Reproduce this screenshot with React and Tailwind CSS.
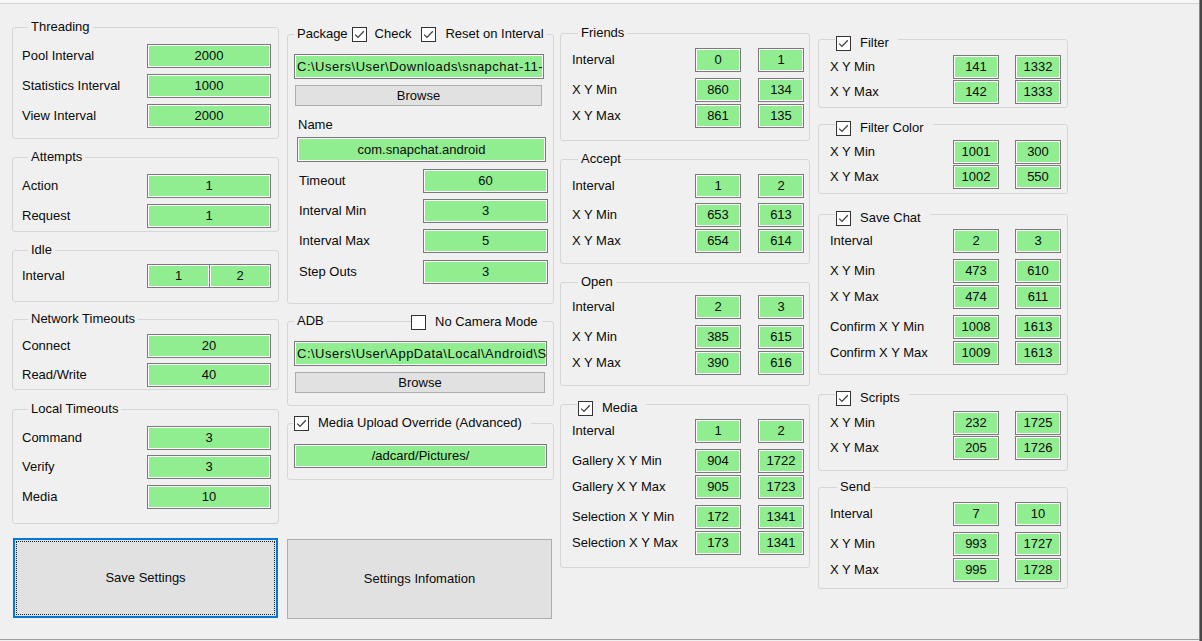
import React from 'react';

// checkbox glyph, classic win32 look
function Check({ checked = true }) {
  return (
    <span className="flex h-[15px] w-[15px] shrink-0 items-center justify-center border border-[#333333] bg-white">
      {checked && (
        <svg width="13" height="13" viewBox="0 0 13 13">
          <path d="M2.2 6.6 L5 9.4 L10.8 3.2" fill="none" stroke="#404040" strokeWidth="1.3" />
        </svg>
      )}
    </span>
  );
}

function Field({ value, className = '' }) {
  return (
    <div className={`flex h-[24px] items-center justify-center border border-[#7a7a7a] bg-[#90ee90] shadow-[inset_0_0_0_1px_#ffffff] ${className}`}>
      {value}
    </div>
  );
}

function PathField({ value, className = '' }) {
  return (
    <div className={`flex h-[25px] items-center overflow-hidden whitespace-nowrap border border-[#7a7a7a] bg-[#90ee90] pl-[2px] tracking-[0.5px] shadow-[inset_0_0_0_1px_#ffffff] ${className}`}>
      {value}
    </div>
  );
}

function Title({ children }) {
  return (
    <legend className="ml-[6px] px-[3px]">
      <span className="flex h-[16px] items-center">{children}</span>
    </legend>
  );
}

function CheckTitle({ children }) {
  return (
    <legend className="ml-[5px] pl-[1px] pr-[9px]">
      <span className="flex h-[16px] translate-y-[4px] items-center gap-[9px]">
        <Check />
        {children}
      </span>
    </legend>
  );
}

function Row({ label, children, className = '' }) {
  return (
    <div className={`flex h-[24px] items-center ${className}`}>
      <span className="flex-1 whitespace-nowrap">{label}</span>
      {children}
    </div>
  );
}

// X / Y input pair used by the coordinate groups
function Pair({ a, b, gap }) {
  return (
    <div className={`flex ${gap}`}>
      <Field value={a} className="w-[46px]" />
      <Field value={b} className="w-[46px]" />
    </div>
  );
}

const box = 'w-full rounded-[3px] border border-[#d6d6d6]';

function ColumnOne() {
  return (
    <div className="flex w-[267px] flex-col">
      <fieldset className={`${box} mt-[15px] pb-[10px] pl-[9px] pr-[7px]`}>
        <Title>Threading</Title>
        <Row label="Pool Interval" className="mt-[9px]"><Field value="2000" className="w-[124px]" /></Row>
        <Row label="Statistics Interval" className="mt-[6px]"><Field value="1000" className="w-[124px]" /></Row>
        <Row label="View Interval" className="mt-[6px]"><Field value="2000" className="w-[124px]" /></Row>
      </fieldset>

      <fieldset className={`${box} mt-[10px] pb-[3px] pl-[9px] pr-[7px]`}>
        <Title>Attempts</Title>
        <Row label="Action" className="mt-[9px]"><Field value="1" className="w-[124px]" /></Row>
        <Row label="Request" className="mt-[6px]"><Field value="1" className="w-[124px]" /></Row>
      </fieldset>

      <fieldset className={`${box} mt-[10px] pb-[13px] pl-[9px] pr-[7px]`}>
        <Title>Idle</Title>
        <Row label="Interval" className="mt-[6px]">
          <div className="flex w-[124px]">
            <Field value="1" className="w-[63px]" />
            <Field value="2" className="-ml-px w-[62px]" />
          </div>
        </Row>
      </fieldset>

      <fieldset className={`${box} mt-[9px] pb-[2px] pl-[9px] pr-[7px]`}>
        <Title>Network Timeouts</Title>
        <Row label="Connect" className="mt-[7px]"><Field value="20" className="w-[124px]" /></Row>
        <Row label="Read/Write" className="mt-[5px]"><Field value="40" className="w-[124px]" /></Row>
      </fieldset>

      <fieldset className={`${box} mt-[11px] pb-[14px] pl-[9px] pr-[7px]`}>
        <Title>Local Timeouts</Title>
        <Row label="Command" className="mt-[9px]"><Field value="3" className="w-[124px]" /></Row>
        <Row label="Verify" className="mt-[5px]"><Field value="3" className="w-[124px]" /></Row>
        <Row label="Media" className="mt-[6px]"><Field value="10" className="w-[124px]" /></Row>
      </fieldset>

      <button className="ml-px mt-[14px] flex h-[80px] w-[265px] items-center justify-center border-2 border-[#0078d7] bg-[#e1e1e1] outline-1 outline-offset-[-4px] outline-dotted outline-[#222222]">
        Save Settings
      </button>
    </div>
  );
}

function ColumnTwo() {
  return (
    <div className="ml-[8px] flex w-[267px] flex-col">
      <fieldset className={`${box} mt-[22px] pb-[19px]`}>
        <legend className="ml-[6px] px-[3px]">
          <span className="flex h-[16px] items-center">
            <span>Package</span>
            <span className="ml-[4px]"><Check /></span>
            <span className="ml-[8px]">Check</span>
            <span className="ml-[10px]"><Check /></span>
            <span className="ml-[9px]">Reset on Interval</span>
          </span>
        </legend>
        <PathField value="C:\Users\User\Downloads\snapchat-11-43-1-apkpure.apk" className="ml-[6px] mt-[12px] h-[24px] w-[250px]" />
        <button className="ml-[7px] mt-[6px] flex h-[21px] w-[247px] items-center justify-center border border-[#adadad] bg-[#e1e1e1]">
          Browse
        </button>
        <div className="mt-[11px] h-[16px] pl-[10px]">Name</div>
        <Field value="com.snapchat.android" className="ml-[9px] mt-[4px] h-[25px] w-[249px]" />
        <div className="pl-[11px] pr-[5px]">
          <Row label="Timeout" className="mt-[7px]"><Field value="60" className="w-[125px]" /></Row>
          <Row label="Interval Min" className="mt-[6px]"><Field value="3" className="w-[125px]" /></Row>
          <Row label="Interval Max" className="mt-[6px]"><Field value="5" className="w-[125px]" /></Row>
          <Row label="Step Outs" className="mt-[7px]"><Field value="3" className="w-[125px]" /></Row>
        </div>
      </fieldset>

      <div className="relative mt-[9px]">
        <fieldset className={`${box} pb-[12px]`}>
          <Title>ADB</Title>
          <PathField value="C:\Users\User\AppData\Local\Android\Sdk\platform-tools" className="ml-[6px] mt-[12px] w-[253px]" />
          <button className="ml-[7px] mt-[6px] flex h-[21px] w-[250px] items-center justify-center border border-[#adadad] bg-[#e1e1e1]">
            Browse
          </button>
        </fieldset>
        {/* checkbox sits on top of the group border */}
        <div className="absolute left-[124px] top-[1px] flex h-[16px] items-center gap-[9px] bg-[#f0f0f0] pr-[4px]">
          <Check checked={false} />
          <span>No Camera Mode</span>
        </div>
      </div>

      <fieldset className={`${box} mt-[9px] pb-[11px]`}>
        <legend className="ml-[5px] pl-px pr-[9px]">
          <span className="flex h-[16px] items-center gap-[9px]">
            <Check />
            Media Upload Override (Advanced)
          </span>
        </legend>
        <Field value="/adcard/Pictures/" className="ml-[6px] mt-[13px] w-[253px]" />
      </fieldset>

      <button className="mt-[59px] flex h-[80px] w-[265px] items-center justify-center border border-[#adadad] bg-[#e1e1e1]">
        Settings Infomation
      </button>
    </div>
  );
}

function ColumnThree() {
  const g = 'gap-[17px]';
  return (
    <div className="ml-[6px] flex w-[250px] flex-col">
      <fieldset className={`${box} mt-[21px] pb-[12px] pl-[11px] pr-[5px]`}>
        <Title>Friends</Title>
        <Row label="Interval" className="mt-[7px]"><Pair a="0" b="1" gap={g} /></Row>
        <Row label="X Y Min" className="mt-[6px]"><Pair a="860" b="134" gap={g} /></Row>
        <Row label="X Y Max" className="mt-[2px]"><Pair a="861" b="135" gap={g} /></Row>
      </fieldset>

      <fieldset className={`${box} mt-[10px] pb-[10px] pl-[11px] pr-[5px]`}>
        <Title>Accept</Title>
        <Row label="Interval" className="mt-[7px]"><Pair a="1" b="2" gap={g} /></Row>
        <Row label="X Y Min" className="mt-[5px]"><Pair a="653" b="613" gap={g} /></Row>
        <Row label="X Y Max" className="mt-[2px]"><Pair a="654" b="614" gap={g} /></Row>
      </fieldset>

      <fieldset className={`${box} mt-[10px] pb-[10px] pl-[11px] pr-[5px]`}>
        <Title>Open</Title>
        <Row label="Interval" className="mt-[5px]"><Pair a="2" b="3" gap={g} /></Row>
        <Row label="X Y Min" className="mt-[6px]"><Pair a="385" b="615" gap={g} /></Row>
        <Row label="X Y Max" className="mt-[2px]"><Pair a="390" b="616" gap={g} /></Row>
      </fieldset>

      <fieldset className={`${box} mt-[10px] pb-[12px] pl-[11px] pr-[5px]`}>
        <CheckTitle>Media</CheckTitle>
        <Row label="Interval" className="mt-[7px]"><Pair a="1" b="2" gap={g} /></Row>
        <Row label="Gallery X Y Min" className="mt-[6px]"><Pair a="904" b="1722" gap={g} /></Row>
        <Row label="Gallery X Y Max" className="mt-[2px]"><Pair a="905" b="1723" gap={g} /></Row>
        <Row label="Selection X Y Min" className="mt-[6px]"><Pair a="172" b="1341" gap={g} /></Row>
        <Row label="Selection X Y Max" className="mt-[2px]"><Pair a="173" b="1341" gap={g} /></Row>
      </fieldset>
    </div>
  );
}

function ColumnFour() {
  const g = 'gap-[16px]';
  return (
    <div className="ml-[8px] flex w-[250px] flex-col">
      <fieldset className={`${box} mt-[27px] pb-[3px] pl-[11px] pr-[6px]`}>
        <CheckTitle>Filter</CheckTitle>
        <Row label="X Y Min" className="mt-[8px]"><Pair a="141" b="1332" gap={g} /></Row>
        <Row label="X Y Max" className="mt-[1px]"><Pair a="142" b="1333" gap={g} /></Row>
      </fieldset>

      <fieldset className={`${box} mt-[8px] pb-[4px] pl-[11px] pr-[6px]`}>
        <CheckTitle>Filter Color</CheckTitle>
        <Row label="X Y Min" className="mt-[8px]"><Pair a="1001" b="300" gap={g} /></Row>
        <Row label="X Y Max" className="mt-[1px]"><Pair a="1002" b="550" gap={g} /></Row>
      </fieldset>

      <fieldset className={`${box} mt-[12px] pb-[9px] pl-[11px] pr-[6px]`}>
        <CheckTitle>Save Chat</CheckTitle>
        <Row label="Interval" className="mt-[7px]"><Pair a="2" b="3" gap={g} /></Row>
        <Row label="X Y Min" className="mt-[6px]"><Pair a="473" b="610" gap={g} /></Row>
        <Row label="X Y Max" className="mt-[2px]"><Pair a="474" b="611" gap={g} /></Row>
        <Row label="Confirm X Y Min" className="mt-[6px]"><Pair a="1008" b="1613" gap={g} /></Row>
        <Row label="Confirm X Y Max" className="mt-[2px]"><Pair a="1009" b="1613" gap={g} /></Row>
      </fieldset>

      <fieldset className={`${box} mt-[11px] pb-[10px] pl-[11px] pr-[6px]`}>
        <CheckTitle>Scripts</CheckTitle>
        <Row label="X Y Min" className="mt-[9px]"><Pair a="232" b="1725" gap={g} /></Row>
        <Row label="X Y Max" className="mt-[1px]"><Pair a="205" b="1726" gap={g} /></Row>
      </fieldset>

      <fieldset className={`${box} mt-[8px] pb-[6px] pl-[11px] pr-[6px]`}>
        <legend className="ml-[7px] px-[3px]">
          <span className="flex h-[16px] items-center">Send</span>
        </legend>
        <Row label="Interval" className="mt-[7px]"><Pair a="7" b="10" gap={g} /></Row>
        <Row label="X Y Min" className="mt-[6px]"><Pair a="993" b="1727" gap={g} /></Row>
        <Row label="X Y Max" className="mt-[2px]"><Pair a="995" b="1728" gap={g} /></Row>
      </fieldset>
    </div>
  );
}

export default function App() {
  return (
    <div className="flex h-[641px] w-[1202px] overflow-hidden bg-[#f0f0f0] font-['Liberation_Sans',Arial,sans-serif] text-[13px] leading-[16px] text-[#0a0a0a]">
      <div className="flex flex-1 flex-col">
        <div className="h-[4px] shrink-0 border-b border-[#d4d4d4] bg-[#f7f7f7]" />
        <div className="flex flex-1 pl-[12px]">
          <ColumnOne />
          <ColumnTwo />
          <ColumnThree />
          <ColumnFour />
        </div>
        <div className="h-[2px] shrink-0 border-t border-[#9c9c9c]" />
      </div>
      <div className="w-[3px] shrink-0 border-l border-[#8a8a8a] bg-[#474747]" />
    </div>
  );
}
